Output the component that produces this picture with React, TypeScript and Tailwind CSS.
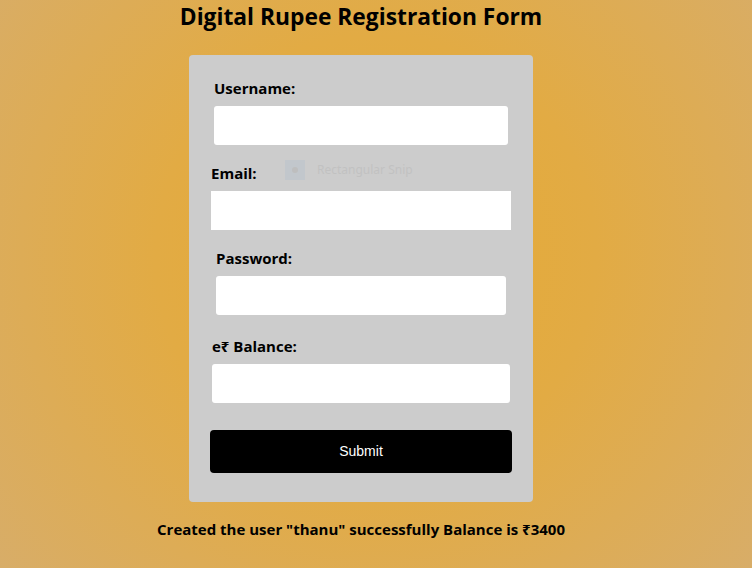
import React from "react";

const font = { fontFamily: '"Open Sans", "Noto Sans", sans-serif' };

type FieldProps = {
  label: string;
  width: string;
  rounded?: boolean;
  type?: string;
  className?: string;
};

function Field({ label, width, rounded = true, type = "text", className = "" }: FieldProps) {
  return (
    <div className={`flex flex-col ${width} ${className}`}>
      <label className="text-[15px] leading-5 font-bold text-black">{label}</label>
      <input
        type={type}
        className={`mt-2 h-[39px] w-full bg-white outline-none ${rounded ? "rounded-[3px]" : ""}`}
      />
    </div>
  );
}

export default function App() {
  return (
    <div
      className="relative min-h-[568px] w-full bg-[radial-gradient(circle_at_50%_45%,#e6aa33_0%,#e2ab44_45%,#d8ad68_100%)] text-black"
      style={font}
    >
      <div className="flex flex-col items-center pr-[30px]">
        <h1 className="mt-[2px] text-[22.8px] leading-[30px] font-bold">Digital Rupee Registration Form</h1>

        <form className="mt-[23px] flex w-[344px] flex-col items-center rounded-[4px] bg-[#cccccc] pt-[23px] pb-[29px]">
          <Field label="Username:" width="w-[294px]" />
          <Field label="Email:" width="w-[300px]" rounded={false} type="email" className="mt-[18px]" />
          <Field label="Password:" width="w-[290px]" type="password" className="mt-[18px]" />
          <Field label="e₹ Balance:" width="w-[298px]" className="mt-[21px]" />
          <button
            type="button"
            className="mt-[27px] h-[43px] w-[302px] rounded-[4px] bg-black text-[14px] text-white"
            style={{ fontFamily: '"Liberation Sans", Arial, sans-serif' }}
          >
            Submit
          </button>
        </form>

        <p className="mt-[17px] text-[15px] leading-5 font-bold">
          Created the user "thanu" successfully Balance is ₹3400
        </p>
      </div>

      {/* faint snipping tool ghost */}
      <div className="absolute left-[285px] top-[160px] flex items-center gap-3 opacity-20">
        <div className="flex h-[20px] w-[20px] items-center justify-center bg-[#9fb6cc]">
          <div className="h-[6px] w-[6px] rounded-full bg-[#888]" />
        </div>
        <span className="text-[12px] text-[#999]" style={{ fontFamily: '"Noto Sans", sans-serif' }}>
          Rectangular Snip
        </span>
      </div>
    </div>
  );
}
